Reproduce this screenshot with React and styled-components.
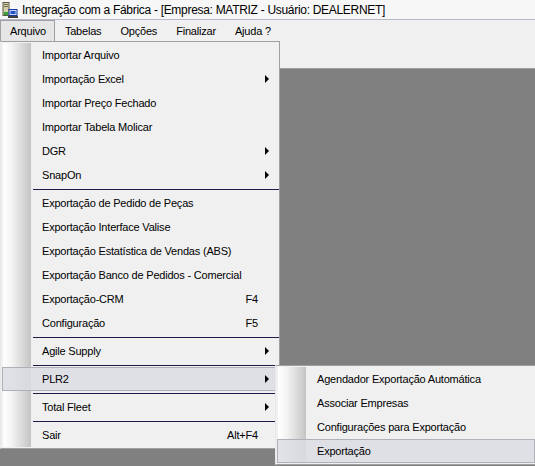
import styled, { createGlobalStyle } from "styled-components";

const Global = createGlobalStyle`
  html, body { margin: 0; padding: 0; background: #808080; overflow: hidden; }
  body { font-family: "Liberation Sans", Arial, sans-serif; font-size: 11px; color: #000; }
`;

const Window = styled.div`
  position: relative;
  width: 535px;
  height: 466px;
  display: flex;
  flex-direction: column;
  overflow: hidden;
`;

const TitleBar = styled.div`
  height: 19px;
  display: flex;
  align-items: center;
  gap: 4px;
  padding-left: 2px;
  background: #f7f7f7;
  border-bottom: 1px solid #b8b8c8;
  font-size: 12px;
  letter-spacing: -0.3px;
`;

const MenuBar = styled.div`
  height: 21px;
  display: flex;
  align-items: stretch;
  background: #f0f0f0;
  letter-spacing: -0.2px;
`;

const BarItem = styled.div`
  display: flex;
  align-items: center;
  padding: 0 8px 0 9px;
  box-sizing: border-box;
  border: 1px solid ${(p) => (p.$open ? "#a0a0a0" : "transparent")};
  border-bottom: none;
  background: ${(p) => (p.$open ? "#e6e6e6" : "transparent")};
`;

const ToolStrip = styled.div`
  height: 27px;
  background: #f0f0f0;
  border-bottom: 1px solid #a0a0a0;
`;

const Workspace = styled.div`
  flex: 1;
  background: #808080;
`;

const Menu = styled.div`
  position: absolute;
  left: ${(p) => p.$left}px;
  top: ${(p) => p.$top}px;
  width: ${(p) => p.$width}px;
  box-sizing: border-box;
  padding: 1px 0;
  border: 1px solid #a0a0a0;
  border-left-color: #e8e8e8;
  letter-spacing: -0.2px;
  background:
    linear-gradient(to right, #ffffff 0%, #f4f4f4 30%, #c4c4c4 100%) 2px 1px / 28px calc(100% - 2px) no-repeat,
    #f0f0f0;
`;

const Row = styled.div`
  position: relative;
  height: 24px;
  display: flex;
  align-items: center;
  box-sizing: border-box;
  margin: 0 1px;
  padding: 0 8px 0 39px;
  border: 1px solid ${(p) => (p.$hot ? "#b0b0b8" : "transparent")};
  background: ${(p) => (p.$hot ? "rgba(220, 220, 228, 0.85)" : "transparent")};
`;

const Label = styled.span`
  flex: 1;
  white-space: nowrap;
`;

const Shortcut = styled.span`
  margin-right: 11px;
`;

const Arrow = styled.span`
  width: 0;
  height: 0;
  border-left: 4px solid #000;
  border-top: 4px solid transparent;
  border-bottom: 4px solid transparent;
`;

const Separator = styled.div`
  height: 4px;
  display: flex;
  align-items: center;
  padding-left: 32px;
  &::after {
    content: "";
    flex: 1;
    height: 1px;
    background: #1c1c48;
  }
`;

const AppIcon = () => (
  <svg width="16" height="16" viewBox="0 0 16 16">
    <rect x="1" y="0.5" width="6" height="13" fill="#d8d0a8" stroke="#5a5a40" strokeWidth="1" />
    <rect x="2" y="2" width="4" height="1" fill="#6a6a50" />
    <rect x="2" y="4" width="4" height="1" fill="#6a6a50" />
    <rect x="2" y="10" width="4" height="3" fill="#38a038" />
    <rect x="7" y="7.5" width="8" height="6" fill="#c8d8f0" stroke="#1838a0" strokeWidth="1" />
    <rect x="8.5" y="9" width="5" height="3" fill="#2050d0" />
    <rect x="6" y="14" width="10" height="2" fill="#404040" />
  </svg>
);

const mainItems = [
  { label: "Importar Arquivo" },
  { label: "Importação Excel", sub: true },
  { label: "Importar Preço Fechado" },
  { label: "Importar Tabela Molicar" },
  { label: "DGR", sub: true },
  { label: "SnapOn", sub: true },
  { sep: true },
  { label: "Exportação de Pedido de Peças" },
  { label: "Exportação Interface Valise" },
  { label: "Exportação Estatística de Vendas (ABS)" },
  { label: "Exportação Banco de Pedidos - Comercial" },
  { label: "Exportação-CRM", key: "F4" },
  { label: "Configuração", key: "F5" },
  { sep: true },
  { label: "Agile Supply", sub: true },
  { sep: true },
  { label: "PLR2", sub: true, hot: true },
  { sep: true },
  { label: "Total Fleet", sub: true },
  { sep: true },
  { label: "Sair", key: "Alt+F4" },
];

const plrItems = [
  { label: "Agendador Exportação Automática" },
  { label: "Associar Empresas" },
  { label: "Configurações para Exportação" },
  { label: "Exportação", hot: true },
];

function MenuRows({ items }) {
  return items.map((it, i) =>
    it.sep ? (
      <Separator key={i} />
    ) : (
      <Row key={i} $hot={it.hot}>
        <Label>{it.label}</Label>
        {it.key && <Shortcut>{it.key}</Shortcut>}
        {it.sub && <Arrow />}
      </Row>
    )
  );
}

export default function App() {
  return (
    <>
      <Global />
      <Window>
        <TitleBar>
          <AppIcon />
          <span>Integração com a Fábrica - [Empresa: MATRIZ - Usuário: DEALERNET]</span>
        </TitleBar>
        <MenuBar>
          <BarItem $open>Arquivo</BarItem>
          <BarItem>Tabelas</BarItem>
          <BarItem>Opções</BarItem>
          <BarItem>Finalizar</BarItem>
          <BarItem>Ajuda ?</BarItem>
        </MenuBar>
        <ToolStrip />
        <Workspace />

        <Menu $left={0} $top={41} $width={280}>
          <MenuRows items={mainItems} />
        </Menu>
        <Menu $left={275} $top={365} $width={262}>
          <MenuRows items={plrItems} />
        </Menu>
      </Window>
    </>
  );
}
